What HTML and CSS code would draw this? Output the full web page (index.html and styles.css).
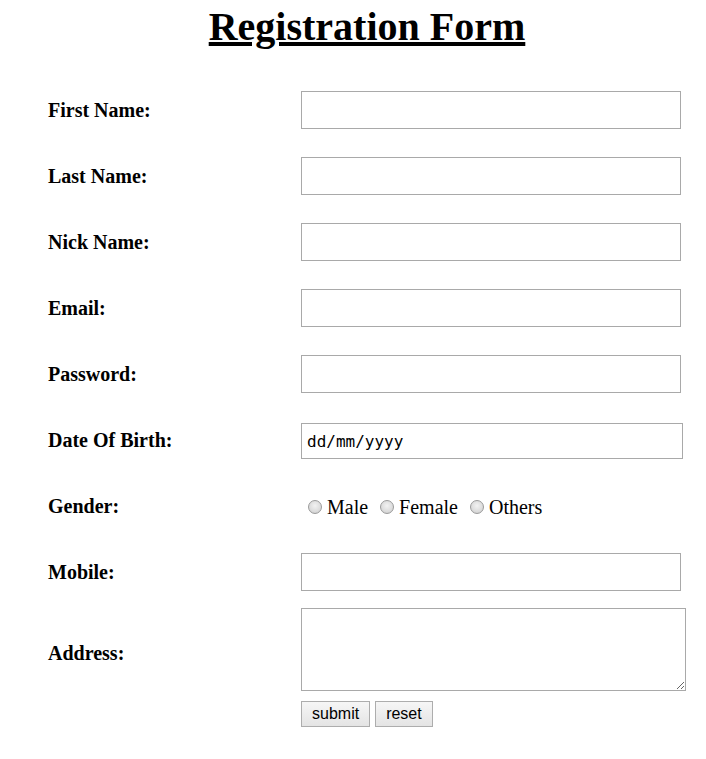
FILE: index.html
```html
<!DOCTYPE html>
<html lang="en">
<head>
<meta charset="utf-8">
<title>Registration Form</title>
<link rel="stylesheet" href="styles.css">
</head>
<body>
<h1 class="title">Registration Form</h1>
<form class="form">
  <div class="row"><label class="lbl">First Name:</label><input class="field" type="text"></div>
  <div class="row"><label class="lbl">Last Name:</label><input class="field" type="text"></div>
  <div class="row"><label class="lbl">Nick Name:</label><input class="field" type="text"></div>
  <div class="row"><label class="lbl">Email:</label><input class="field" type="text"></div>
  <div class="row"><label class="lbl">Password:</label><input class="field" type="password"></div>
  <div class="row"><label class="lbl">Date Of Birth:</label><input class="field date" type="text" value="dd/mm/yyyy"></div>
  <div class="row"><label class="lbl">Gender:</label>
    <div class="radios">
      <label class="opt"><input class="radio" type="radio" name="g">Male</label>
      <label class="opt"><input class="radio" type="radio" name="g">Female</label>
      <label class="opt"><input class="radio" type="radio" name="g">Others</label>
    </div>
  </div>
  <div class="row"><label class="lbl">Mobile:</label><input class="field" type="text"></div>
  <div class="row addr"><label class="lbl lbl-addr">Address:</label><textarea class="area"></textarea></div>
  <div class="actions">
    <button class="btn" type="submit">submit</button>
    <button class="btn" type="reset">reset</button>
  </div>
</form>
</body>
</html>
```
FILE: styles.css
```css
html, body {
  margin: 0;
  padding: 0;
  background: #fff;
}
body {
  font-family: "Liberation Serif", "Times New Roman", serif;
  color: #000;
}
.title {
  margin: 4px 0 27px;
  padding-left: 28px;
  text-align: center;
  font-size: 40px;
  line-height: 46px;
  font-weight: bold;
  text-decoration: underline;
}
.form {
  padding-left: 48px;
}
.row {
  display: grid;
  grid-template-columns: 253px 1fr;
  align-items: center;
  height: 66px;
}
.lbl {
  font-size: 20px;
  font-weight: bold;
}
.field {
  box-sizing: border-box;
  width: 380px;
  height: 38px;
  margin: 0;
  border: 1px solid #a9a9a9;
  padding: 0 6px;
  font-size: 16px;
  outline: none;
}
.date {
  width: 382px;
  height: 36px;
  margin-top: 2px;
  padding-left: 5px;
  font-family: "DejaVu Sans Mono", monospace;
  font-size: 16px;
  color: #000;
}
.radios {
  display: flex;
  align-items: center;
  gap: 12px;
  padding-top: 2px;
  font-size: 20px;
}
.opt {
  display: flex;
  align-items: center;
}
.radio {
  appearance: none;
  -webkit-appearance: none;
  box-sizing: border-box;
  width: 14px;
  height: 14px;
  margin: 0 5px 0 7px;
  border: 1px solid #9a9a9a;
  border-radius: 50%;
  background: radial-gradient(circle at 50% 40%, #f2f2f2 0%, #dcdcdc 60%, #c8c8c8 100%);
}
.opt + .opt .radio {
  margin-left: 0;
}
.addr {
  height: auto;
  padding-top: 3px;
}
.lbl-addr {
  margin-top: 7px;
}
.area {
  display: block;
  box-sizing: border-box;
  width: 385px;
  height: 83px;
  margin: 0;
  border: 1px solid #a9a9a9;
  outline: none;
}
.actions {
  display: flex;
  gap: 5px;
  margin: 10px 0 0 253px;
}
.btn {
  box-sizing: border-box;
  height: 26px;
  padding: 0 10px;
  border: 1px solid #adadad;
  border-radius: 0;
  background: linear-gradient(#f6f6f6, #e4e4e4);
  font-family: "Liberation Sans", Arial, sans-serif;
  font-size: 16px;
  color: #000;
}
```
